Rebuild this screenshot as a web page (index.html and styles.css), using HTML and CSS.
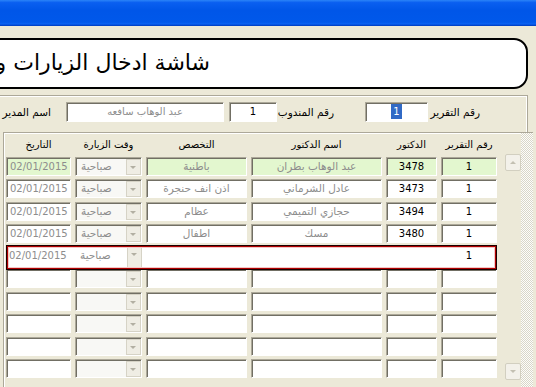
FILE: index.html
```html
<!DOCTYPE html>
<html lang="ar" dir="rtl">
  <head>
    <meta charset="UTF-8" />
    <title>شاشة ادخال الزيارات والتقارير</title>
    <link rel="stylesheet" href="styles.css">
  </head>
  <body>
    <div class="titlebar"></div>
    <div class="window">
      <div class="banner">شاشة ادخال الزيارات والتقارير</div>

      <div class="panel">
        <div class="fields">
          <div class="lbl lbl-report">رقم التقرير</div>
          <div class="box box-report"><span class="sel">1</span></div>
          <div class="lbl lbl-agent">رقم المندوب</div>
          <div class="box box-agent">1</div>
          <div class="box box-manager dim">عبد الوهاب سافعه</div>
          <div class="lbl lbl-manager">اسم المدير</div>
        </div>

        <div class="subform">
          <div class="track"></div>
          <div class="scroll">
            <div class="sbtn up"></div>
            <div class="sbtn down"></div>
          </div>
          <div class="sheet">
            <div class="row head">
              <div>رقم التقرير</div>
              <div>الدكتور</div>
              <div>اسم الدكتور</div>
              <div>التخصص</div>
              <div>وقت الزيارة</div>
              <div>التاريخ</div>
            </div>

            <div class="row green">
              <div class="cell num">1</div>
              <div class="cell num">3478</div>
              <div class="cell dim">عبد الوهاب بطران</div>
              <div class="cell dim">باطنية</div>
              <div class="cell combo"><div class="arrow"></div><div class="txt">صباحية</div></div>
              <div class="cell date">02/01/2015</div>
            </div>
            <div class="row">
              <div class="cell num">1</div>
              <div class="cell num">3473</div>
              <div class="cell dim">عادل الشرماني</div>
              <div class="cell dim">اذن انف حنجرة</div>
              <div class="cell combo"><div class="arrow"></div><div class="txt">صباحية</div></div>
              <div class="cell date">02/01/2015</div>
            </div>
            <div class="row">
              <div class="cell num">1</div>
              <div class="cell num">3494</div>
              <div class="cell dim">حجازي التميمي</div>
              <div class="cell dim">عظام</div>
              <div class="cell combo"><div class="arrow"></div><div class="txt">صباحية</div></div>
              <div class="cell date">02/01/2015</div>
            </div>
            <div class="row">
              <div class="cell num">1</div>
              <div class="cell num">3480</div>
              <div class="cell dim">مسك</div>
              <div class="cell dim">اطفال</div>
              <div class="cell combo"><div class="arrow"></div><div class="txt">صباحية</div></div>
              <div class="cell date">02/01/2015</div>
            </div>
            <div class="row current">
              <div class="cell num">1</div>
              <div class="cell num"></div>
              <div class="cell dim"></div>
              <div class="cell dim"></div>
              <div class="cell combo"><div class="arrow"></div><div class="txt">صباحية</div></div>
              <div class="cell date">02/01/2015</div>
            </div>
            <div class="row">
              <div class="cell"></div><div class="cell"></div><div class="cell"></div><div class="cell"></div>
              <div class="cell combo"><div class="arrow"></div><div class="txt"></div></div>
              <div class="cell date"></div>
            </div>
            <div class="row">
              <div class="cell"></div><div class="cell"></div><div class="cell"></div><div class="cell"></div>
              <div class="cell combo"><div class="arrow"></div><div class="txt"></div></div>
              <div class="cell date"></div>
            </div>
            <div class="row">
              <div class="cell"></div><div class="cell"></div><div class="cell"></div><div class="cell"></div>
              <div class="cell combo"><div class="arrow"></div><div class="txt"></div></div>
              <div class="cell date"></div>
            </div>
            <div class="row">
              <div class="cell"></div><div class="cell"></div><div class="cell"></div><div class="cell"></div>
              <div class="cell combo"><div class="arrow"></div><div class="txt"></div></div>
              <div class="cell date"></div>
            </div>
            <div class="row">
              <div class="cell"></div><div class="cell"></div><div class="cell"></div><div class="cell"></div>
              <div class="cell combo"><div class="arrow"></div><div class="txt"></div></div>
              <div class="cell date"></div>
            </div>
          </div>
        </div>
      </div>
    </div>
  </body>
</html>
```

FILE: styles.css
```css
* {
  box-sizing: border-box;
}
html,
body {
  margin: 0;
}
body {
  width: 536px;
  height: 387px;
  overflow: hidden;
  background: #ece9d8;
  font-family: "DejaVu Sans", sans-serif;
  font-size: 11px;
  color: #000;
}
.titlebar {
  height: 26px;
  background: linear-gradient(180deg, #2b84f8, #0a5ff0 10%, #0056e8 40%, #0058ea 85%, #0a62f2 92%, #0046d0 97%, #003dbd);
}
.window {
  padding: 12px 8px 0 0;
}
.banner {
  height: 51px;
  margin-left: -40px;
  padding-right: 316px;
  border: 2px solid #000;
  border-radius: 14px;
  background: #fff;
  font-size: 22px;
  line-height: 46px;
  white-space: nowrap;
  overflow: hidden;
}

/* header fields */
.panel {
  margin-top: 6px;
  border-top: 1px solid #aca899;
  border-right: 1px solid #aca899;
  box-shadow: inset -1px 1px 0 #fff;
}
.fields {
  display: flex;
  align-items: center;
  height: 20px;
  margin-top: 6px;
  padding-right: 47px;
}
.lbl {
  font-size: 10.5px;
  white-space: nowrap;
}
.lbl-report {
  width: 52px;
}
.lbl-agent {
  width: 88px;
  padding-right: 31px;
}
.lbl-manager {
  margin-right: 15px;
}
.box {
  height: 20px;
  border: 1px solid;
  border-color: #aca899 #fff #fff #aca899;
  box-shadow: inset 1px 1px 0 #716f64;
  background: #fff;
  text-align: center;
  line-height: 18px;
  font-size: 10px;
}
.box-report {
  width: 63px;
}
.box-agent {
  width: 48px;
}
.box-manager {
  width: 158px;
  margin-right: 5px;
}
.sel {
  display: inline-block;
  padding: 0 2px;
  line-height: 15px;
  background: #316ac5;
  color: #fff;
}
.dim {
  color: #8d8d8d;
}

/* continuous subform */
.subform {
  display: flex;
  height: 262px;
  margin: 10px -6px 0 3px;
  border-top: 1px solid #aca899;
  border-left: 1px solid #aca899;
  box-shadow: inset 1px 1px 0 #fff;
}
.track {
  width: 12px;
  background: repeating-conic-gradient(#fdfdfb 0 25%, #d9d6c8 0 50%) 0 0 / 2px 2px;
}
.scroll {
  display: flex;
  flex-direction: column;
  justify-content: space-between;
  width: 16px;
  padding: 21px 0 14px;
  margin-left: 8px;
}
.sbtn {
  height: 17px;
  border: 1px solid #d2cfc0;
  border-radius: 2px;
  background: #f3f1ea;
  position: relative;
}
.sbtn::after {
  content: "";
  position: absolute;
  left: 4px;
  border: 3px solid transparent;
}
.sbtn.up::after {
  border-bottom-color: #c3c0b2;
  border-top-width: 0;
  top: 6px;
}
.sbtn.down::after {
  border-top-color: #c3c0b2;
  border-bottom-width: 0;
  top: 6px;
}
.sheet {
  width: 491px;
  display: flex;
  flex-direction: column;
  gap: 3.5px;
}
.row {
  display: grid;
  grid-template-columns: 56px 51px 131px 101px 67px 65px;
  column-gap: 4px;
  height: 19px;
  font-size: 10.5px;
}
.row.head {
  height: 20px;
  align-items: end;
  text-align: center;
  font-size: 10px;
  line-height: 14px;
  padding-bottom: 1px;
}
.cell {
  border: 1px solid;
  border-color: #aca899 #fff #fff #aca899;
  box-shadow: inset 1px 1px 0 #716f64;
  background: #fff;
  text-align: center;
  line-height: 17px;
  white-space: nowrap;
  overflow: hidden;
}
.num {
  color: #000;
  font-size: 10px;
}
.date {
  direction: ltr;
  text-align: left;
  padding-left: 3px;
  font-size: 10px;
  color: #8d8d8d;
}
.combo {
  display: flex;
  background: #f8f8f5;
  color: #8d8d8d;
}
.combo .txt {
  flex: 1;
  text-align: left;
  padding-left: 5px;
}
.arrow {
  width: 15px;
  margin-top: 1px;
  border: 1px solid #d6d3c6;
  background: #efede4;
  position: relative;
}
.arrow::after {
  content: "";
  position: absolute;
  left: 3px;
  top: 6px;
  border: 3px solid transparent;
  border-top-color: #b2afa2;
  border-bottom-width: 0;
}
.green .cell {
  background: #e3f7cf;
}
.green .combo {
  background: #f8f8f5;
}
.current {
  position: relative;
}
.current::before {
  content: "";
  position: absolute;
  top: -2px;
  bottom: -4px;
  left: 0;
  right: 0;
  background: #fff;
}
.current::after {
  content: "";
  position: absolute;
  top: -2px;
  bottom: -4px;
  left: 0;
  right: 0;
  border: 1px solid #1a0000;
  box-shadow: inset 0 0 0 1px #b00000, inset 0 0 0 2px #f2c8c8;
}
.current .cell {
  position: relative;
  border: none;
  box-shadow: none;
  background: #fff;
  height: 23px;
  margin-top: -2px;
  line-height: 21px;
}
```
